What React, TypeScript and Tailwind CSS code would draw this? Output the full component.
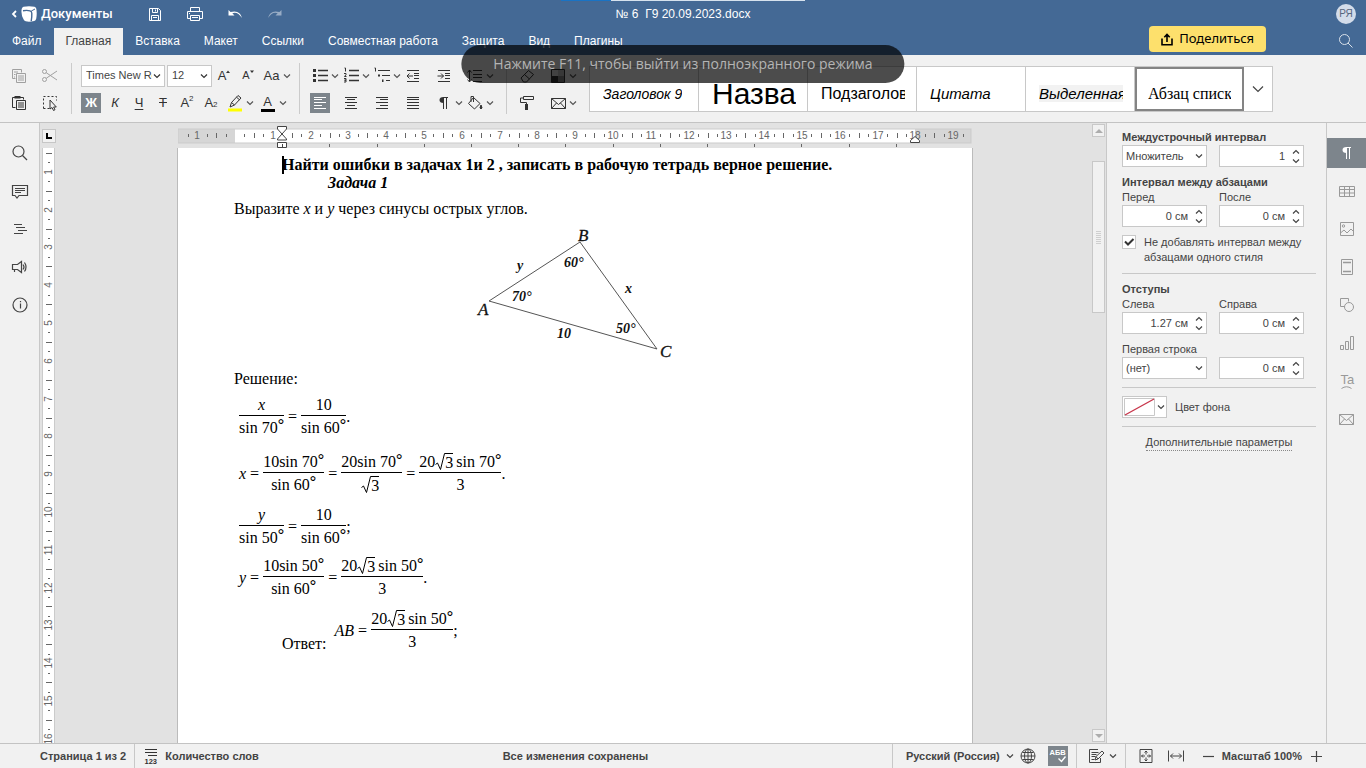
import React from 'react';

const sans = "font-['Liberation_Sans',Arial,sans-serif]";
const serif = "font-['Liberation_Serif','Times_New_Roman',serif]";

interface IconProps {
  children: React.ReactNode;
  className?: string;
}

function Icon({ children, className = '' }: IconProps) {
  return (
    <svg viewBox="0 0 20 20" width="20" height="20" fill="none" stroke="currentColor" strokeWidth="1" className={`shrink-0 ${className}`} aria-hidden="true">
      {children}
    </svg>
  );
}

function Chevron({ className = '' }: { className?: string }) {
  return (
    <svg viewBox="0 0 8 6" width="8" height="6" fill="none" stroke="currentColor" strokeWidth="1.2" className={`shrink-0 ${className}`} aria-hidden="true">
      <path d="M1 1.5l3 3 3-3" />
    </svg>
  );
}

interface ToolProps {
  label: string;
  children: React.ReactNode;
  menu?: boolean;
  active?: boolean;
  muted?: boolean;
}

function Tool({ label, children, menu, active, muted }: ToolProps) {
  return (
    <button type="button" aria-label={label} className={`flex w-[31px] items-center gap-px ${muted ? 'text-[#a0a0a0]' : 'text-[#333]'}`}>
      <span className={`flex size-5 items-center justify-center ${active ? 'bg-[#7d858c] text-white' : ''}`}>{children}</span>
      {menu && <Chevron className="text-[#555]" />}
    </button>
  );
}

function Letter({ label, children, menu, active }: ToolProps) {
  return (
    <button type="button" aria-label={label} className={`flex items-center text-[13px] text-[#333] ${menu ? 'w-[33px]' : 'w-6 justify-center'}`}>
      <span className={`flex h-5 items-center justify-center ${menu ? 'w-[23px]' : 'w-5'} ${active ? 'bg-[#7d858c] text-white' : ''}`}>{children}</span>
      {menu && <Chevron className="text-[#555]" />}
    </button>
  );
}

const tabs = ['Файл', 'Главная', 'Вставка', 'Макет', 'Ссылки', 'Совместная работа', 'Защита', 'Вид', 'Плагины'];

function Header() {
  return (
    <header className="bg-[#446995] text-white">
      <div className="grid h-[26px] grid-cols-[1fr_auto_1fr] items-center pt-[2px]">
        <div className="flex items-center">
          <a href="#docs" className="flex items-center pl-[11px] text-[13px] font-medium font-['Roboto',sans-serif]">
            <svg viewBox="0 0 6 10" width="6" height="10" fill="none" stroke="currentColor" strokeWidth="1.8" aria-hidden="true">
              <path d="M5 2L2 5l3 3" />
            </svg>
            <svg viewBox="0 0 16 16" width="16" height="16" className="ml-1 mr-1" aria-hidden="true">
              <path d="M2.5 .8Q8-.4 13.5 .8 15 1.200 15.300 2.800q.9 5-.1 10-.4 1.800-2 2.200-5 1.200-8.500 .3-1.700-.5-2.200-2Q-.3 8 .7 3 1.200 1.200 2.500 .8z" fill="#fff" />
              <path d="M2 4.800q4-.8 7 .1 1.700.5 1.800 2.300.2 4-.6 8" fill="none" stroke="#446995" strokeWidth="1.400" />
              <path d="M10.300 5l3.700-2" stroke="#446995" strokeWidth="1" />
            </svg>
            Документы
          </a>
          <div className="ml-8 flex gap-5">
            <button type="button" aria-label="Сохранить">
              <Icon>
                <path d="M4.500 4.500h9l2 2v10h-11zM7.500 4.500v4h5v-4M10.500 5.500v2M6.500 16.500v-5h7v5M8 13.500h4" />
              </Icon>
            </button>
            <button type="button" aria-label="Печать">
              <Icon>
                <path d="M5.500 7.500v-4h9v4M5.500 14.500h-3v-7h15v7h-3M5.500 11.500h9v5h-9zM7 13.500h6M4 9.500h1" />
              </Icon>
            </button>
            <button type="button" aria-label="Отменить">
              <Icon>
                <path d="M3.500 6v5.500h6l-2.200-2.200q5-2.300 9.700 4.700-2-8.500-11.500-6z" fill="currentColor" stroke="none" />
              </Icon>
            </button>
            <button type="button" aria-label="Повторить" className="opacity-45">
              <Icon>
                <path d="M16.500 6v5.500h-6l2.200-2.200Q7.700 7 3 14q2-8.500 11.500-6z" fill="currentColor" stroke="none" />
              </Icon>
            </button>
          </div>
        </div>
        <h1 className="whitespace-pre text-xs">№ 6  Г9 20.09.2023.docx</h1>
        <div className="flex w-10 items-center justify-center justify-self-end">
          <button type="button" className="size-5 rounded-full bg-[#d3dcea] text-[10px] leading-5 text-[#56657d]">РЯ</button>
        </div>
      </div>
      <div className="flex h-[29px]">
        <nav className="flex items-end">
          {tabs.map(tab => (
            <a key={tab} href="#tab" className={`h-[27px] px-3 text-xs leading-[26px] ${tab === 'Главная' ? 'bg-[#f1f1f1] text-[#444]' : ''}`}>
              {tab}
            </a>
          ))}
        </nav>
        <button type="button" className="ml-auto mr-[60px] flex h-[26px] items-center gap-[6px] rounded bg-[#fde06c] px-3 text-[13px] text-black font-['Noto_Sans',sans-serif]">
          <svg viewBox="0 0 12 13" width="12" height="13" fill="none" stroke="currentColor" strokeWidth="1.600" aria-hidden="true">
            <path d="M1 5.500v6.300h10V5.500M6 9V2M3.300 4.200L6 1.500l2.700 2.700" />
          </svg>
          Поделиться
        </button>
        <button type="button" aria-label="Поиск" className="flex w-10 items-center justify-center">
          <Icon className="opacity-80">
            <circle cx="8.500" cy="8.500" r="5" />
            <path d="M12 12l4.500 4.500" />
          </Icon>
        </button>
      </div>
    </header>
  );
}

function ListLines() {
  return <path d="M8 4.500h10M8 9.500h10M8 14.500h10" strokeWidth="1.300" />;
}

function Toolbar() {
  return (
    <div className="flex h-[68px] border-b border-[#c3c3c3] text-[#333]">
      <div className="flex flex-col pl-[9px] pt-[7px]">
        <div className="flex h-[27px]">
          <Tool label="Копировать" muted>
            <Icon>
              <path d="M6.500 12.500h-3v-9h9v3M5 6h4M5 8.500h1.500M5 11h1M7.500 7.500h9v9h-9zM9 10h6M9 12h6M9 14h6" />
            </Icon>
          </Tool>
          <Tool label="Вырезать" muted>
            <Icon>
              <circle cx="4.500" cy="5.500" r="2" />
              <circle cx="4.500" cy="13.500" r="2" />
              <path d="M6.200 6.700L17 14M6.200 12.300L17 5" />
            </Icon>
          </Tool>
        </div>
        <div className="flex h-[27px]">
          <Tool label="Вставить">
            <Icon>
              <path d="M6.500 14.500h-3v-10h11v2" />
              <path d="M5.500 3h6v2.500h-6z" fill="currentColor" stroke="none" />
              <path d="M7.500 7.500h9v9h-9zM9 10h6M9 12h6M9 14h6" />
            </Icon>
          </Tool>
          <Tool label="Выделить все">
            <Icon>
              <path d="M3.500 15.500v-12h13v4M3.500 15.500h6" strokeDasharray="2 2" />
              <path d="M10 7v9l2-1.500 1.500 3 1.500-.8-1.400-2.700h2.700z" fill="#f1f1f1" />
            </Icon>
          </Tool>
        </div>
      </div>
      <div className="my-2 w-px bg-[#cbcbcb]" />

      <div className="flex w-[227px] flex-col pl-[7px] pt-[7px]">
        <div className="flex h-[27px] items-center pl-[2px]">
          <div className="relative">
            <select aria-label="Шрифт" className="block h-[22px] w-[84px] appearance-none border border-[#c8c8c8] bg-white pl-1 pr-3 text-[11px] text-[#444]">
              <option>Times New Roman</option>
            </select>
            <Chevron className="pointer-events-none absolute right-1 top-2" />
          </div>
          <div className="relative ml-[2px]">
            <select aria-label="Размер шрифта" className="block h-[22px] w-[45px] appearance-none border border-[#c8c8c8] bg-white pl-1 text-[11px] text-[#444]">
              <option>12</option>
            </select>
            <Chevron className="pointer-events-none absolute right-1 top-2" />
          </div>
          <Letter label="Увеличить размер">
            <span>A</span>
            <svg viewBox="0 0 4 12" width="4" height="12" aria-hidden="true"><path d="M0 3l2-2.500L4 3z" fill="currentColor" /></svg>
          </Letter>
          <Letter label="Уменьшить размер">
            <span className="text-[11px]">A</span>
            <svg viewBox="0 0 4 12" width="4" height="12" aria-hidden="true"><path d="M0 .5h4L2 3z" fill="currentColor" /></svg>
          </Letter>
          <Letter label="Изменить регистр" menu>Aa</Letter>
        </div>
        <div className="flex h-[27px] items-center">
          <Letter label="Полужирный" active><b>Ж</b></Letter>
          <Letter label="Курсив"><i>К</i></Letter>
          <Letter label="Подчеркнутый"><u className="underline-offset-2">Ч</u></Letter>
          <Letter label="Зачеркнутый"><s>Т</s></Letter>
          <Letter label="Надстрочные знаки">A<sup className="text-[8px]">2</sup></Letter>
          <Letter label="Подстрочные знаки">A<sub className="text-[8px]">2</sub></Letter>
          <Letter label="Цвет выделения" menu>
            <Icon>
              <path d="M3 15.500h14v3H3z" fill="#ffff00" stroke="none" />
              <path d="M5 14l1.500-4.500 6.500-7 3 2.500-6.500 7zM6.500 9.500l3 2.500M11.500 4.200l3 2.600" />
            </Icon>
          </Letter>
          <Letter label="Цвет шрифта" menu>
            <span className="h-[19px] w-[14px] border-b-[3px] border-black text-center leading-[17px]">A</span>
          </Letter>
        </div>
      </div>
      <div className="my-2 w-px bg-[#cbcbcb]" />

      <div className="grid auto-rows-[27px] grid-cols-[repeat(6,31px)] px-[10px] pt-[7px]">
        <Tool label="Маркеры" menu>
          <Icon>
            <ListLines />
            <path d="M3 3h3v3H3zM3 8h3v3H3zM3 13h3v3H3z" fill="currentColor" stroke="none" />
          </Icon>
        </Tool>
        <Tool label="Нумерация" menu>
          <Icon>
            <ListLines />
            <path d="M3.500 2h1v3.500M3 7.500h2v1.200L3.500 10.500h2M3 12.500h2v1.700H3.500h1.500v1.800H3" />
          </Icon>
        </Tool>
        <Tool label="Многоуровневый список" menu>
          <Icon>
            <path d="M2.500 2h1v3.500M6 4.500h12M10 9.500h8M14 14.500h4" />
            <path d="M6 8.500h2v2H6zM10 13.500h1.500v2.500H10z" fill="currentColor" stroke="none" />
          </Icon>
        </Tool>
        <Tool label="Уменьшить отступ">
          <Icon>
            <path d="M4 4.500h12M11 7.500h5M11 9.500h5M11 12.500h5M4 15.500h12M4 10h6M6.500 7.500L4 10l2.500 2.500" />
          </Icon>
        </Tool>
        <Tool label="Увеличить отступ">
          <Icon>
            <path d="M4 4.500h12M11 7.500h5M11 9.500h5M11 12.500h5M4 15.500h12M3.500 10h6M7 7.500L9.500 10 7 12.500" />
          </Icon>
        </Tool>
        <Tool label="Междустрочный интервал" menu>
          <Icon>
            <path d="M8 4.500h9M8 8.500h9M8 11.500h9M8 15.500h9M4.500 4v12M2.500 6.500l2-2.500 2 2.500M2.500 13.500l2 2.500 2-2.500" />
          </Icon>
        </Tool>
        <Tool label="По левому краю" active>
          <Icon>
            <path d="M4 4.500h12M4 6.500h8M4 9.500h12M4 12.500h8M4 15.500h12" />
          </Icon>
        </Tool>
        <Tool label="По центру">
          <Icon>
            <path d="M4 4.500h12M6 6.500h8M4 9.500h12M6 12.500h8M4 15.500h12" />
          </Icon>
        </Tool>
        <Tool label="По правому краю">
          <Icon>
            <path d="M4 4.500h12M8 6.500h8M4 9.500h12M8 12.500h8M4 15.500h12" />
          </Icon>
        </Tool>
        <Tool label="По ширине">
          <Icon>
            <path d="M4 4.500h12M4 6.500h12M4 9.500h12M4 12.500h12M4 15.500h12" />
          </Icon>
        </Tool>
        <Tool label="Непечатаемые символы" menu>
          <Icon>
            <path d="M9 4.500h5M9.500 4v12M12.500 4v12" />
            <path d="M9.500 4q-4 0-4 3t4 3z" fill="currentColor" stroke="none" />
          </Icon>
        </Tool>
        <Tool label="Заливка" menu>
          <Icon>
            <path d="M8.500 4.500l6.500 6-5.500 5.500-6-5.500zM6 9V3.500h2.500V9" />
            <path d="M16 12q2 3.500 0 4-2-.5 0-4z" fill="currentColor" />
          </Icon>
        </Tool>
      </div>
      <div className="my-2 w-px bg-[#cbcbcb]" />

      <div className="grid auto-rows-[27px] grid-cols-[31px_31px] px-[10px] pt-[7px]">
        <Tool label="Очистить стиль">
          <Icon>
            <path d="M4 12l7.500-7.500 5 4-7 7.500h-3zM7.500 8.500l5 4.500" />
          </Icon>
        </Tool>
        <Tool label="Цветовая схема" menu>
          <Icon>
            <path d="M4 4h6v6H4z" fill="#ddd" stroke="none" />
            <path d="M4 10h6v6H4z" fill="#333" stroke="none" />
            <path d="M10 4h6v6h-6z" fill="#bbb" stroke="none" />
            <path d="M10 10h6v6h-6z" fill="#888" stroke="none" />
            <path d="M3.500 3.500h13v13h-13z" />
          </Icon>
        </Tool>
        <Tool label="Копировать стиль">
          <Icon>
            <path d="M6.500 3.500h10v3h-10zM6.500 5h-3v4.500h6v2" />
            <path d="M8 11h3v6H8z" fill="currentColor" stroke="none" />
          </Icon>
        </Tool>
        <Tool label="Слияние" menu>
          <Icon>
            <path d="M3.500 5.500h14v10h-14zM3.500 5.500l7 6 7-6M3.500 15.500l5-5.500M17.500 15.500l-5-5.500" />
          </Icon>
        </Tool>
      </div>

      <div className="mt-[11px] flex h-[46px] border border-[#c8c8c8] bg-white text-black">
        <StyleItem><i className="text-sm">Заголовок 9</i></StyleItem>
        <StyleItem><span className="text-[30px]">Название</span></StyleItem>
        <StyleItem><span className="text-base">Подзаголовок</span></StyleItem>
        <StyleItem><i className="text-[15px]">Цитата</i></StyleItem>
        <StyleItem><i className="bg-[#f2f2f2] text-[15px]">Выделенная цитата</i></StyleItem>
        <StyleItem selected><span className={`text-base ${serif}`}>Абзац списка</span></StyleItem>
        <button type="button" aria-label="Все стили" className="flex w-7 items-center justify-center text-[#444]">
          <svg viewBox="0 0 12 8" width="12" height="8" fill="none" stroke="currentColor" strokeWidth="1.200" aria-hidden="true">
            <path d="M1 1.500l5 5 5-5" />
          </svg>
        </button>
      </div>
    </div>
  );
}

function StyleItem({ children, selected }: { children: React.ReactNode; selected?: boolean }) {
  return (
    <button
      type="button"
      className={`flex w-[109px] items-start text-left ${selected ? 'border-2 border-[#848484] px-[11px] pt-[6px]' : 'border-r border-[#c8c8c8] pl-[13px] pr-[11px] pt-2'}`}
    >
      <span className="block h-8 overflow-hidden whitespace-nowrap leading-[38px]">{children}</span>
    </button>
  );
}

function LeftBar() {
  return (
    <nav className="flex w-10 flex-col items-center gap-[18px] border-r border-[#c8c8c8] pt-5 text-[#444]">
      <button type="button" aria-label="Поиск">
        <Icon>
          <circle cx="8.500" cy="8.500" r="5.500" strokeWidth="1.200" />
          <path d="M12.500 12.500l4.500 4.500" strokeWidth="1.200" />
        </Icon>
      </button>
      <button type="button" aria-label="Комментарии">
        <Icon>
          <path d="M2.500 4.500h15v10H9l-2 2.500-2-2.500H2.500zM5 7.500h10M5 9.500h10M5 11.500h6" strokeWidth="1.200" />
        </Icon>
      </button>
      <button type="button" aria-label="Заголовки">
        <Icon>
          <path d="M4 5.500h8M6 8.500h9M8 11.500h9M4 14.500h9" strokeWidth="1.200" />
        </Icon>
      </button>
      <button type="button" aria-label="Обратная связь">
        <Icon>
          <path d="M2.500 7.500h5l4-3v11l-4-3h-5zM4.500 12.500v2.500M13 7.500q2 2.500 0 5M14.500 5.500q3 4.500 0 9" strokeWidth="1.200" />
        </Icon>
      </button>
      <button type="button" aria-label="О программе">
        <Icon>
          <circle cx="10" cy="10" r="7" strokeWidth="1.200" />
          <path d="M10.500 8.500v5M10.500 6v1.300" strokeWidth="1.200" />
        </Icon>
      </button>
    </nav>
  );
}

// one centimetre at 96 dpi
const CM = 37.8;

function HorizontalRuler() {
  const origin = 57;
  const quarters = Array.from({ length: 83 }, (_, i) => i - 5);
  return (
    <svg width="794" height="25" className="block" aria-hidden="true">
      <rect x="0" y="6" width="793" height="14" fill="#d6d6d6" />
      <rect x="57" y="6" width="680" height="14" fill="#fff" />
      <rect x="0" y="6" width="793" height="14" fill="none" stroke="#cbcbcb" />
      {quarters.map(q => {
        const x = Math.round(origin + (q * CM) / 4);
        if (q === 0) return null;
        if (q % 4 === 0) {
          return (
            <text key={q} x={x} y="16" textAnchor="middle" fontSize="10" fill="#666">
              {Math.abs(q / 4)}
            </text>
          );
        }
        return <path key={q} d={q % 2 === 0 ? `M${x + 0.5} 10v5` : `M${x + 0.5} 11v3`} stroke="#666" />;
      })}
      {Array.from({ length: 13 }, (_, i) => (
        <path key={i} d={`M${Math.round(origin + (i + 2) * 47.2) + 0.5} 21v3`} stroke="#666" />
      ))}
      <path d="M99.500 3.500h9v2.500l-4.500 5 4.500 5v1h-9v-1l4.500-5-4.500-5zM99.500 19.500h9v5h-9zM104.500 21v3" fill="#fff" stroke="#444" />
      <path d="M732.500 19.500v-2l4.500-4 4.500 4v2z" fill="#fff" stroke="#444" />
    </svg>
  );
}

function VerticalRuler() {
  const quarters = Array.from({ length: 64 }, (_, i) => i + 2);
  return (
    <svg width="14" height="620" className="block" aria-hidden="true">
      <rect x="1" y="0" width="12" height="620" fill="#fff" />
      <path d="M.5 0v620M12.500 0v620" stroke="#cbcbcb" />
      {quarters.map(q => {
        const y = Math.round(-14 + (q * CM) / 4);
        if (q % 4 === 0) {
          return (
            <text key={q} transform={`translate(10 ${y}) rotate(-90)`} textAnchor="middle" fontSize="10" fill="#666">
              {q / 4}
            </text>
          );
        }
        return <path key={q} d={q % 2 === 0 ? `M4 ${y + 0.5}h6` : `M6 ${y + 0.5}h2`} stroke="#666" />;
      })}
    </svg>
  );
}

function Triangle() {
  return (
    <svg viewBox="0 0 200 136" width="200" height="136" className="mx-auto my-2 block" fill="#111" fontStyle="italic" fontSize="14" fontWeight="bold" role="img" aria-label="Треугольник ABC">
      <path d="M14 75L105 16 182 123z" fill="none" stroke="#555" />
      <g fontSize="17" fontWeight="normal" stroke="#111" strokeWidth=".3">
        <text x="103" y="15">B</text>
        <text x="3" y="89">A</text>
        <text x="185" y="131">C</text>
      </g>
      <text x="42" y="44">y</text>
      <text x="150" y="67">x</text>
      <text x="89" y="41">60°</text>
      <text x="37" y="75">70°</text>
      <text x="141" y="107">50°</text>
      <text x="82" y="112">10</text>
    </svg>
  );
}

function Frac({ top, bottom }: { top: React.ReactNode; bottom: React.ReactNode }) {
  return (
    <span className="flex flex-col text-center">
      <span className="flex h-[22px] items-center justify-center whitespace-pre border-b border-black">{top}</span>
      <span className="flex h-[23px] items-center justify-center whitespace-pre">{bottom}</span>
    </span>
  );
}

function Sqrt({ children }: { children: React.ReactNode }) {
  return (
    <span className="mr-[3px] flex">
      <svg viewBox="0 0 10 18" width="10" height="18" fill="none" stroke="#000" aria-hidden="true">
        <path d="M.5 11.500l2-1.500 3 6.500L9.500.5h.5" />
      </svg>
      <span className="h-[18px] border-t border-black leading-[17px]">{children}</span>
    </span>
  );
}

function Deg() {
  return <b className="self-start">°</b>;
}

function Equation({ children, className = '' }: { children: React.ReactNode; className?: string }) {
  return <div className={`flex items-center gap-1 leading-[18px] ${className}`}>{children}</div>;
}

function Page() {
  return (
    <article className={`min-h-0 w-[796px] flex-1 overflow-hidden border-x border-[#bbb] bg-white px-14 pt-2 text-base leading-[18px] text-black ${serif}`}>
      <p className="relative pl-12 font-bold">
        <span className="absolute bottom-0 left-12 h-[18px] w-[2px] bg-black" />
        Найти ошибки в задачах 1и 2 , записать в рабочую тетрадь верное решение.
      </p>
      <p className="pl-[94px] font-bold italic">Задача 1</p>
      <p className="mt-2">Выразите <i>x</i> и <i>y</i> через синусы острых углов.</p>
      <Triangle />
      <p>Решение:</p>
      <Equation className="mt-[6px] pl-[5px]">
        <Frac top={<i>x</i>} bottom={<>sin 70<Deg /></>} />
        <span>=</span>
        <Frac top="10" bottom={<>sin 60<Deg /></>} />
        <span className="-ml-1">.</span>
      </Equation>
      <Equation className="mt-3 pl-[5px]">
        <i>x</i>
        <span>=</span>
        <Frac top={<>10sin 70<Deg /></>} bottom={<>sin 60<Deg /></>} />
        <span>=</span>
        <Frac top={<>20sin 70<Deg /></>} bottom={<Sqrt>3</Sqrt>} />
        <span>=</span>
        <Frac top={<>20<Sqrt>3</Sqrt>sin 70<Deg /></>} bottom="3" />
        <span className="-ml-1">.</span>
      </Equation>
      <Equation className="mt-2 pl-[5px]">
        <Frac top={<i>y</i>} bottom={<>sin 50<Deg /></>} />
        <span>=</span>
        <Frac top="10" bottom={<>sin 60<Deg /></>} />
        <span className="-ml-1">;</span>
      </Equation>
      <Equation className="mt-[6px] pl-[5px]">
        <i>y</i>
        <span>=</span>
        <Frac top={<>10sin 50<Deg /></>} bottom={<>sin 60<Deg /></>} />
        <span>=</span>
        <Frac top={<>20<Sqrt>3</Sqrt>sin 50<Deg /></>} bottom="3" />
        <span className="-ml-1">.</span>
      </Equation>
      <div className="mt-2 flex items-end gap-2 pl-12">
        <span>Ответ:</span>
        <Equation>
          <i>AB</i>
          <span>=</span>
          <Frac top={<>20<Sqrt>3</Sqrt>sin 50<Deg /></>} bottom="3" />
          <span className="-ml-1">;</span>
        </Equation>
      </div>
    </article>
  );
}

function Editor() {
  return (
    <main className="flex min-w-0 flex-1 bg-[#e2e2e2]">
      <div className="flex w-[18px] flex-col overflow-hidden pl-[2px]">
        <button type="button" aria-label="Табуляция" className="mb-[5px] mt-[6px] flex size-[14px] shrink-0 items-center justify-center border border-[#c6c6c6] bg-[#f1f1f1]">
          <span className="size-[6px] border-b-2 border-l-2 border-black" />
        </button>
        <VerticalRuler />
      </div>
      <div className="flex min-w-0 flex-1 flex-col items-center overflow-hidden">
        <HorizontalRuler />
        <Page />
      </div>
      <div className="flex w-[14px] flex-col justify-between pb-px pr-[1px] pt-px">
        <button type="button" aria-label="Вверх" className="flex size-[13px] items-center justify-center border border-[#c8c8c8] bg-[#f1f1f1]">
          <svg viewBox="0 0 8 4" width="8" height="4" aria-hidden="true"><path d="M0 4l4-4 4 4z" fill="#adadad" /></svg>
        </button>
        <div className="flex-1 pt-6">
          <div className="flex h-[152px] w-[13px] flex-col items-center justify-center gap-px border border-[#c8c8c8] bg-[#f1f1f1]">
            {[0, 1, 2, 3, 4, 5, 6].map(i => (
              <span key={i} className="h-px w-[5px] bg-[#cfcfcf]" />
            ))}
          </div>
        </div>
        <button type="button" aria-label="Вниз" className="flex size-[13px] items-center justify-center border border-[#c8c8c8] bg-[#f1f1f1]">
          <svg viewBox="0 0 8 4" width="8" height="4" aria-hidden="true"><path d="M0 0l4 4 4-4z" fill="#adadad" /></svg>
        </button>
      </div>
    </main>
  );
}

function Spinner({ id, value, label }: { id: string; value: string; label?: string }) {
  return (
    <div className="w-[85px]">
      {label && <label htmlFor={id} className="block">{label}</label>}
      <div className="relative">
        <input id={id} defaultValue={value} aria-label={label ? undefined : 'Значение'} className="block h-[22px] w-full border border-[#c8c8c8] bg-white pr-[18px] text-right" />
        <Chevron className="absolute right-1 top-1 rotate-180" />
        <Chevron className="absolute bottom-[3px] right-1" />
      </div>
    </div>
  );
}

function Dropdown({ id, value, label }: { id: string; value: string; label?: string }) {
  return (
    <div className="w-[85px]">
      {label && <label htmlFor={id} className="block whitespace-nowrap">{label}</label>}
      <div className="relative">
        <select id={id} aria-label={label ? undefined : 'Междустрочный интервал'} className="block h-[22px] w-full appearance-none border border-[#c8c8c8] bg-white pl-[3px]">
          <option>{value}</option>
        </select>
        <Chevron className="pointer-events-none absolute right-1 top-2" />
      </div>
    </div>
  );
}

function ParagraphPanel() {
  return (
    <aside className="flex w-[220px] flex-col gap-2 border-l border-[#c8c8c8] pl-[15px] pr-[10px] pt-[7px] text-[11px] leading-[15px] text-[#444]">
      <section>
        <h2 className="font-bold">Междустрочный интервал</h2>
        <div className="flex gap-3">
          <Dropdown id="line-rule" value="Множитель" />
          <Spinner id="line-value" value="1" />
        </div>
      </section>
      <section>
        <h2 className="font-bold">Интервал между абзацами</h2>
        <div className="flex gap-3">
          <Spinner id="before" label="Перед" value="0 см" />
          <Spinner id="after" label="После" value="0 см" />
        </div>
      </section>
      <label className="flex gap-2">
        <span className="relative size-[14px] shrink-0">
          <input type="checkbox" defaultChecked className="block size-[14px] appearance-none border border-[#c8c8c8] bg-white" />
          <svg viewBox="0 0 14 14" width="14" height="14" fill="none" stroke="#333" strokeWidth="2" className="pointer-events-none absolute inset-0" aria-hidden="true">
            <path d="M3 6.500l3 3L11.500 4" />
          </svg>
        </span>
        <span>Не добавлять интервал между абзацами одного стиля</span>
      </label>
      <hr className="border-[#c8c8c8]" />
      <section>
        <h2 className="font-bold">Отступы</h2>
        <div className="flex gap-3">
          <Spinner id="left" label="Слева" value="1.27 см" />
          <Spinner id="right" label="Справа" value="0 см" />
        </div>
      </section>
      <div className="flex items-end gap-3">
        <Dropdown id="first-line" label="Первая строка" value="(нет)" />
        <Spinner id="first-line-value" value="0 см" />
      </div>
      <hr className="border-[#c8c8c8]" />
      <div className="flex items-center gap-2">
        <button type="button" id="fill" aria-label="Цвет фона" className="flex h-[22px] w-[45px] items-center gap-[2px] border border-[#c8c8c8] bg-white pl-px">
          <svg viewBox="0 0 31 18" width="31" height="18" fill="none" aria-hidden="true">
            <path d="M.5.5h30v17H.5z" stroke="#c8c8c8" />
            <path d="M1 17L30 1" stroke="#c8364b" strokeWidth="1.300" />
          </svg>
          <Chevron />
        </button>
        <span>Цвет фона</span>
      </div>
      <hr className="border-[#c8c8c8]" />
      <a href="#advanced" className="self-center border-b border-dotted border-[#888]">Дополнительные параметры</a>
    </aside>
  );
}

function RightBar() {
  return (
    <nav className="flex w-10 shrink-0 flex-col gap-2 border-l border-[#c8c8c8] pt-[15px] text-[#999] *:flex *:h-[30px] *:items-center *:justify-center">
      <button type="button" aria-label="Параметры абзаца" className="bg-[#7d858c] text-white">
        <Icon>
          <path d="M9 4.500h5M9.500 4v12M12.500 4v12" />
          <path d="M9.500 4q-4 0-4 3t4 3z" fill="currentColor" stroke="none" />
        </Icon>
      </button>
      <button type="button" aria-label="Параметры таблицы">
        <Icon>
          <path d="M2.500 5.500h15v10h-15zM2.500 8.500h15M2.500 12h15M7.500 5.500v10M12.500 5.500v10" />
        </Icon>
      </button>
      <button type="button" aria-label="Параметры изображения">
        <Icon>
          <path d="M3.500 3.500h13v13h-13zM3.500 14l3.500-3 3 3 4-4 2.500 2.500" />
          <circle cx="6.500" cy="7" r="1.200" />
        </Icon>
      </button>
      <button type="button" aria-label="Колонтитулы">
        <Icon>
          <path d="M4.500 2.500h11v15h-11z" />
          <path d="M6 5.500h8M6 14.500h8" strokeWidth="1.500" />
        </Icon>
      </button>
      <button type="button" aria-label="Параметры фигуры">
        <Icon>
          <path d="M7.500 11.500h-4v-8h8v3" />
          <circle cx="12" cy="12" r="4.500" />
        </Icon>
      </button>
      <button type="button" aria-label="Параметры диаграммы">
        <Icon>
          <path d="M3.500 12.500h3v4h-3zM8.500 8.500h3v8h-3zM13.500 3.500h3v13h-3z" />
        </Icon>
      </button>
      <button type="button" aria-label="Параметры объектов Text Art">
        <Icon>
          <text x="3.500" y="13" fontSize="13" fill="currentColor" stroke="none">Ta</text>
          <path d="M4.500 17.500q5-3.500 10 0" />
        </Icon>
      </button>
      <button type="button" aria-label="Слияние">
        <Icon>
          <path d="M2.500 5.500h14v10h-14zM2.500 5.500l7 6 7-6M2.500 15.500l5-5.500M16.500 15.500l-5-5.500" />
        </Icon>
      </button>
    </nav>
  );
}

function StatusBar() {
  return (
    <footer className="flex h-[25px] items-center border-t border-[#c3c3c3] text-[11px] font-bold text-[#444]">
      <button type="button" className="h-full border-r border-[#c8c8c8] pl-10 pr-2">Страница 1 из 2</button>
      <button type="button" className="flex items-center gap-1 pl-[6px]">
        <Icon className="text-[#333]">
          <path d="M4 3.500h12M4 6.500h12M7 9.500h9" strokeWidth="1.200" />
          <text x="3.500" y="17.500" fontSize="7.500" fontWeight="bold" fill="currentColor" stroke="none">123</text>
        </Icon>
        Количество слов
      </button>
      <p className="flex-1 text-center">Все изменения сохранены</p>
      <button type="button" className="flex h-full items-center gap-[6px] border-l border-[#c8c8c8] pl-[13px]">
        Русский (Россия)
        <Chevron />
      </button>
      <button type="button" aria-label="Язык документа" className="ml-1">
        <Icon>
          <circle cx="10" cy="10" r="7" />
          <ellipse cx="10" cy="10" rx="3.500" ry="7" />
          <path d="M10 3v14M3 10h14M4.500 6.500h11M4.500 13.500h11" />
        </Icon>
      </button>
      <button type="button" aria-label="Проверка орфографии" className="ml-[10px] mr-2 bg-[#7d858c] text-white">
        <Icon>
          <text x="1.500" y="9" fontSize="7.500" fill="currentColor" stroke="none">АБВ</text>
          <path d="M10.500 12.500l3 3 4-5" strokeWidth="1.400" />
        </Icon>
      </button>
      <button type="button" aria-label="Отслеживание изменений" className="flex h-full items-center gap-[3px] border-l border-[#c8c8c8] pl-[9px] pr-2">
        <Icon>
          <path d="M12 3.500H3.500v13h11V12M5.500 6.500h7M5.500 8.500h5M5.500 10.500h4M5.500 13.500h3" />
          <path d="M9 14l1-3.500 6-5.500 2 2-6 6zM10 10.500l2 2.500" />
        </Icon>
        <Chevron />
      </button>
      <button type="button" aria-label="По размеру страницы" className="flex h-full items-center border-l border-[#c8c8c8] pl-[10px]">
        <Icon>
          <path d="M4 3.500h12v13H4zM10 5v3.500M8.500 6.500L10 5l1.500 1.500M10 15v-3.500M8.500 13.500L10 15l1.500-1.500M5.500 10H9M7 8.500L5.500 10 7 11.500M14.500 10H11M13 8.500l1.500 1.500-1.500 1.500" />
        </Icon>
      </button>
      <button type="button" aria-label="По ширине" className="ml-[10px]">
        <Icon>
          <path d="M2.500 4.500v11M17.500 4.500v11M4.500 10h11M7 7.500L4.500 10 7 12.500M13 7.500l2.500 2.500-2.500 2.500" />
        </Icon>
      </button>
      <button type="button" aria-label="Уменьшить" className="ml-3">
        <Icon><path d="M5 10.500h11" strokeWidth="1.200" /></Icon>
      </button>
      <button type="button" className="px-1">Масштаб 100%</button>
      <button type="button" aria-label="Увеличить" className="mr-10">
        <Icon><path d="M5 10.500h11M10.500 5v11" strokeWidth="1.200" /></Icon>
      </button>
    </footer>
  );
}

export default function App() {
  return (
    <div className={`relative flex h-screen flex-col overflow-hidden bg-[#f1f1f1] ${sans}`}>
      <div className="absolute left-1/2 top-0 flex h-px w-[244px] -translate-x-1/2">
        <span className="w-[50px] bg-[#1a73c4]" />
        <span className="flex-1 bg-[#d6e2ee]" />
      </div>
      <Header />
      <Toolbar />
      <div className="flex min-h-0 flex-1">
        <LeftBar />
        <Editor />
        <ParagraphPanel />
        <RightBar />
      </div>
      <StatusBar />
      <div role="status" className="absolute left-1/2 top-[45px] -translate-x-1/2 whitespace-nowrap rounded-full bg-black/70 px-8 text-sm leading-[38px] text-[#b4b4b4] font-['Open_Sans',sans-serif]">
        Нажмите F11, чтобы выйти из полноэкранного режима
      </div>
    </div>
  );
}
